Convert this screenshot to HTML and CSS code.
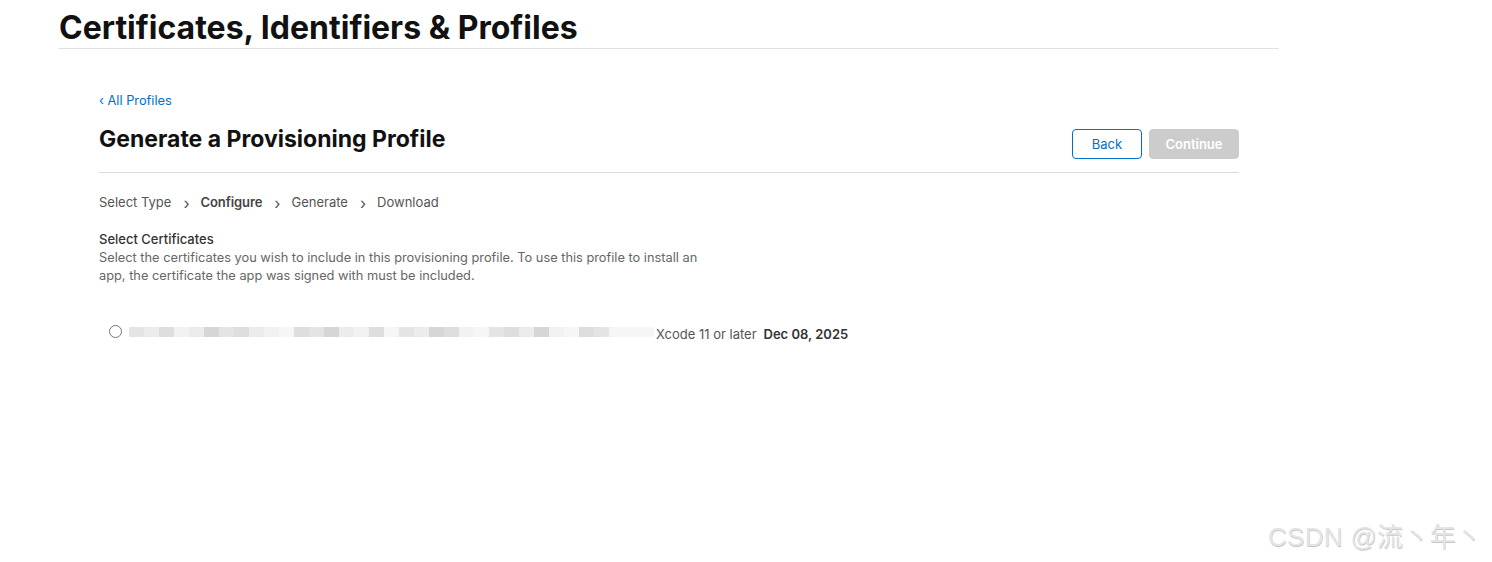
FILE: index.html
```html
<!DOCTYPE html>
<html>
<head>
<meta charset="utf-8">
<link rel="stylesheet" href="styles.css">
</head>
<body>
<header class="top">
  <h1 class="top-title">Certificates, Identifiers &amp; Profiles</h1>
</header>
<main class="content">
  <a class="back-link" href="#">‹ All Profiles</a>
  <div class="page-head">
    <h2 class="page-title">Generate a Provisioning Profile</h2>
    <div class="actions">
      <button class="btn btn-back">Back</button>
      <button class="btn btn-continue">Continue</button>
    </div>
  </div>
  <nav class="steps">
    <span class="step">Select Type</span>
    <span class="sep">›</span>
    <span class="step current">Configure</span>
    <span class="sep">›</span>
    <span class="step">Generate</span>
    <span class="sep">›</span>
    <span class="step">Download</span>
  </nav>
  <section class="section">
    <h3 class="section-title">Select Certificates</h3>
    <p class="section-desc">Select the certificates you wish to include in this provisioning profile. To use this profile to install an app, the certificate the app was signed with must be included.</p>
  </section>
  <div class="cert-row">
    <span class="radio"></span>
    <span class="blurred">
      <i class="b1"></i><i class="b2"></i><i class="b3"></i><i class="b4"></i><i class="b2"></i><i class="b5"></i><i class="b1"></i><i class="b3"></i><i class="b2"></i><i class="b4"></i><i class="b6"></i><i class="b3"></i><i class="b1"></i><i class="b5"></i><i class="b2"></i><i class="b4"></i><i class="b3"></i><i class="b6"></i><i class="b1"></i><i class="b2"></i><i class="b5"></i><i class="b3"></i><i class="b4"></i><i class="b6"></i><i class="b1"></i><i class="b3"></i><i class="b2"></i><i class="b5"></i><i class="b4"></i><i class="b6"></i><i class="b3"></i><i class="b1"></i><i class="b6"></i><i class="b6"></i><i class="b6"></i>
    </span>
    <span class="cert-type">Xcode 11 or later</span>
    <span class="cert-date">Dec 08, 2025</span>
  </div>
</main>
<div class="watermark">CSDN @流丶年丶</div>
</body>
</html>
```
FILE: styles.css
```css
* { box-sizing: border-box; }
body {
  margin: 0;
  font-family: Inter, "Noto Sans", "Liberation Sans", sans-serif;
  color: #1d1d1f;
  background: #fff;
  width: 1492px;
  height: 562px;
  overflow: hidden;
  position: relative;
}
.top {
  margin: 0 213px 0 59px;
  border-bottom: 1px solid #e0e0e0;
  height: 49px;
  padding-top: 9px;
}
.top-title {
  margin: 0;
  font-size: 32px;
  font-weight: 700;
  line-height: 38px;
  color: #111;
}
.content {
  margin: 0 253px 0 99px;
  padding-top: 44px;
}
.back-link {
  display: block;
  font-size: 12.8px;
  color: #0070c9;
  text-decoration: none;
  line-height: 16px;
}
.page-head {
  display: flex;
  justify-content: space-between;
  align-items: flex-start;
  border-bottom: 1px solid #dcdcdc;
  height: 64px;
  padding-top: 16px;
}
.page-title {
  margin: 0;
  font-size: 23px;
  font-weight: 700;
  line-height: 28px;
  color: #111;
}
.actions {
  display: flex;
  gap: 7px;
  padding-top: 4px;
}
.btn {
  font-family: inherit;
  font-size: 13px;
  height: 30px;
  border-radius: 4px;
  padding: 0;
}
.btn-back {
  width: 70px;
  border: 1px solid #0070c9;
  background: #fff;
  color: #0070c9;
}
.btn-continue {
  width: 90px;
  border: 1px solid #cccccc;
  background: #cccccc;
  color: #fff;
  font-weight: 600;
}
.steps {
  display: flex;
  align-items: center;
  font-size: 13px;
  color: #555;
  margin-top: 19px;
  line-height: 18px;
}
.sep {
  font-size: 16px;
  margin: 2px 11px 0 12px;
  color: #555;
}
.step.current {
  font-weight: 600;
  color: #444;
  letter-spacing: -0.1px;
}
.section {
  margin-top: 18px;
}
.section-title {
  margin: 0;
  font-size: 13px;
  font-weight: 500;
  color: #333;
  line-height: 19px;
}
.section-desc {
  margin: 0;
  font-size: 12.8px;
  color: #666;
  line-height: 18px;
  width: 620px;
}
.cert-row {
  display: flex;
  align-items: center;
  margin-top: 40px;
  margin-left: 10px;
  font-size: 13px;
  line-height: 18px;
}
.radio {
  width: 13px;
  height: 13px;
  border: 1px solid #767676;
  border-radius: 50%;
  margin-top: -6px;
}
.blurred {
  display: flex;
  margin-left: 7px;
  height: 10px;
  margin-top: -5px;
}
.blurred i {
  display: block;
  width: 15px;
  height: 10px;
}
.b1 { background: #e4e4e4; }
.b2 { background: #ececec; }
.b3 { background: #dedede; }
.b4 { background: #f2f2f2; }
.b5 { background: #d6d6d6; }
.b6 { background: #f6f6f6; }
.cert-type {
  margin-left: 2px;
  color: #555;
}
.cert-date {
  margin-left: 7px;
  font-weight: 600;
  color: #333;
}
.watermark {
  position: absolute;
  left: 1268px;
  top: 516px;
  font-size: 26px;
  color: #e4e4e4;
  font-family: "Liberation Sans", "Noto Sans CJK SC", sans-serif;
  text-shadow: 0.5px 0.5px 0.5px #c8c8c8;
  letter-spacing: 0.3px;
}
```
